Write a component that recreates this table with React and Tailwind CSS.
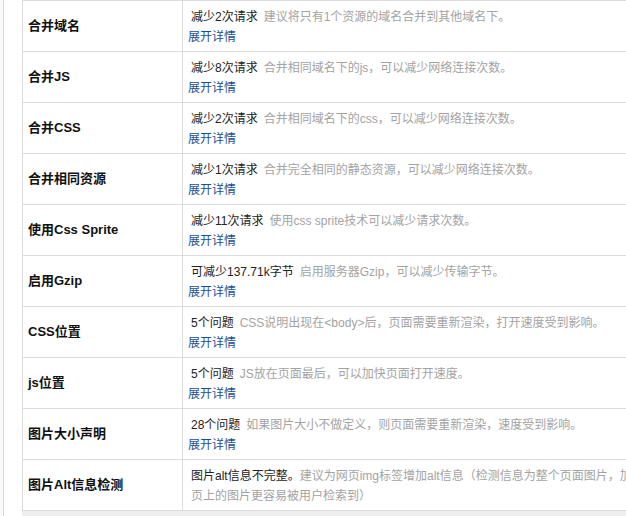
const rows = [
  { title: '合并域名', count: '减少2次请求', desc: '建议将只有1个资源的域名合并到其他域名下。' },
  { title: '合并JS', count: '减少8次请求', desc: '合并相同域名下的js，可以减少网络连接次数。' },
  { title: '合并CSS', count: '减少2次请求', desc: '合并相同域名下的css，可以减少网络连接次数。' },
  { title: '合并相同资源', count: '减少1次请求', desc: '合并完全相同的静态资源，可以减少网络连接次数。' },
  { title: '使用Css Sprite', count: '减少11次请求', desc: '使用css sprite技术可以减少请求次数。' },
  { title: '启用Gzip', count: '可减少137.71k字节', desc: '启用服务器Gzip，可以减少传输字节。' },
  { title: 'CSS位置', count: '5个问题', desc: 'CSS说明出现在<body>后，页面需要重新渲染，打开速度受到影响。' },
  { title: 'js位置', count: '5个问题', desc: 'JS放在页面最后，可以加快页面打开速度。' },
  { title: '图片大小声明', count: '28个问题', desc: '如果图片大小不做定义，则页面需要重新渲染，速度受到影响。' },
]

const font = { fontFamily: '"Liberation Sans", Arial, "Noto Sans CJK SC", sans-serif' }

function Row({ title, children }) {
  return (
    <div className="flex h-[51px] shrink-0 border-t border-[#dcdcdc]">
      <div className="w-[161px] shrink-0 border-l border-r border-[#dcdcdc] flex items-center pl-[5px] text-[13px] font-bold text-[#111]">
        {title}
      </div>
      <div className="flex-1 flex flex-col justify-center pt-[2px] pl-[7px] text-[12px] leading-[20px] whitespace-nowrap">
        {children}
      </div>
    </div>
  )
}

export default function App() {
  return (
    <div className="w-[626px] h-[516px] overflow-hidden bg-white flex" style={font}>
      <div className="w-[3px] shrink-0 bg-[#f7f9fa]" />
      <div className="w-px shrink-0 bg-[#c9dcea]" />
      <div className="w-[18px] shrink-0" />
      <div className="w-[720px] shrink-0 flex flex-col">
        {rows.map((r) => (
          <Row key={r.title} title={r.title}>
            <div className="pl-px">
              <span className="text-[#222]">{r.count}</span>
              <span className="ml-[6px] text-[#a3a3a3]">{r.desc}</span>
            </div>
            <a className="-ml-[2px] text-[#1d4f8f] cursor-pointer">展开详情</a>
          </Row>
        ))}
        <Row title="图片Alt信息检测">
          <div className="pl-px">
            <span className="text-[#222]">图片alt信息不完整。</span>
            <span className="text-[#a3a3a3]">建议为网页img标签增加alt信息（检测信息为整个页面图片，加上alt信息能让网</span>
          </div>
          <div className="pl-px text-[#a3a3a3]">页上的图片更容易被用户检索到）</div>
        </Row>
        <div className="flex-1 border-t border-[#dcdcdc] bg-[#efefef]" />
      </div>
    </div>
  )
}
